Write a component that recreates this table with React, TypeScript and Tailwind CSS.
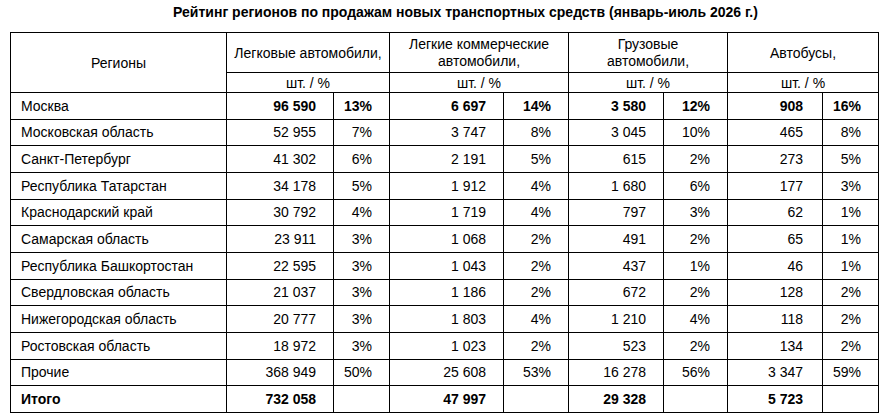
import React from "react";

type Row = string[];

const rows: Row[] = [
  ["Москва", "96 590", "13%", "6 697", "14%", "3 580", "12%", "908", "16%"],
  ["Московская область", "52 955", "7%", "3 747", "8%", "3 045", "10%", "465", "8%"],
  ["Санкт-Петербург", "41 302", "6%", "2 191", "5%", "615", "2%", "273", "5%"],
  ["Республика Татарстан", "34 178", "5%", "1 912", "4%", "1 680", "6%", "177", "3%"],
  ["Краснодарский край", "30 792", "4%", "1 719", "4%", "797", "3%", "62", "1%"],
  ["Самарская область", "23 911", "3%", "1 068", "2%", "491", "2%", "65", "1%"],
  ["Республика Башкортостан", "22 595", "3%", "1 043", "2%", "437", "1%", "46", "1%"],
  ["Свердловская область", "21 037", "3%", "1 186", "2%", "672", "2%", "128", "2%"],
  ["Нижегородская область", "20 777", "3%", "1 803", "4%", "1 210", "4%", "118", "2%"],
  ["Ростовская область", "18 972", "3%", "1 023", "2%", "523", "2%", "134", "2%"],
  ["Прочие", "368 949", "50%", "25 608", "53%", "16 278", "56%", "3 347", "59%"],
  ["Итого", "732 058", "", "47 997", "", "29 328", "", "5 723", ""],
];

const cell = "border border-black p-0";

const App = () => {
  return (
    <div
      className="w-[886px] h-[417px] bg-white text-black overflow-hidden"
      style={{ fontFamily: '"Liberation Sans", Arial, sans-serif' }}
    >
      <div className="h-[32px] pt-[4px] pl-[53px] w-[878px] text-center font-bold text-[14px] leading-[16px]">
        Рейтинг регионов по продажам новых транспортных средств (январь-июль 2026 г.)
      </div>
      <table className="ml-[10px] w-[868px] table-fixed border-collapse text-[14px] leading-[16px]">
        <colgroup>
          <col className="w-[216px]" />
          <col className="w-[107px]" />
          <col className="w-[56px]" />
          <col className="w-[114px]" />
          <col className="w-[65px]" />
          <col className="w-[95px]" />
          <col className="w-[64px]" />
          <col className="w-[95px]" />
          <col className="w-[56px]" />
        </colgroup>
        <thead>
          <tr className="h-[40px]">
            <th rowSpan={2} className={`${cell} font-normal text-center`}>
              Регионы
            </th>
            <th colSpan={2} className={`${cell} font-normal text-center`}>
              Легковые автомобили,
            </th>
            <th colSpan={2} className={`${cell} font-normal text-center leading-[17px]`}>
              Легкие коммерческие
              <br />
              автомобили,
            </th>
            <th colSpan={2} className={`${cell} font-normal text-center leading-[17px]`}>
              Грузовые
              <br />
              автомобили,
            </th>
            <th colSpan={2} className={`${cell} font-normal text-center`}>
              Автобусы,
            </th>
          </tr>
          <tr className="h-[20px]">
            <th colSpan={2} className={`${cell} font-normal text-center`}>шт. / %</th>
            <th colSpan={2} className={`${cell} font-normal text-center`}>шт. / %</th>
            <th colSpan={2} className={`${cell} font-normal text-center`}>шт. / %</th>
            <th colSpan={2} className={`${cell} font-normal text-center`}>шт. / %</th>
          </tr>
        </thead>
        <tbody>
          {rows.map((r, i) => {
            const boldNums = i === 0 || i === rows.length - 1;
            const boldName = i === rows.length - 1;
            return (
              <tr key={r[0]} className="h-[26.67px]">
                <td className={`${cell} pl-[10px] text-left whitespace-nowrap ${boldName ? "font-bold" : ""}`}>
                  {r[0]}
                </td>
                {r.slice(1).map((v, j) => (
                  <td
                    key={j}
                    className={`${cell} text-right whitespace-nowrap ${j === 6 ? "pr-[19px]" : "pr-[17px]"} ${boldNums ? "font-bold" : ""}`}
                  >
                    {v}
                  </td>
                ))}
              </tr>
            );
          })}
        </tbody>
      </table>
    </div>
  );
};

export default App;
